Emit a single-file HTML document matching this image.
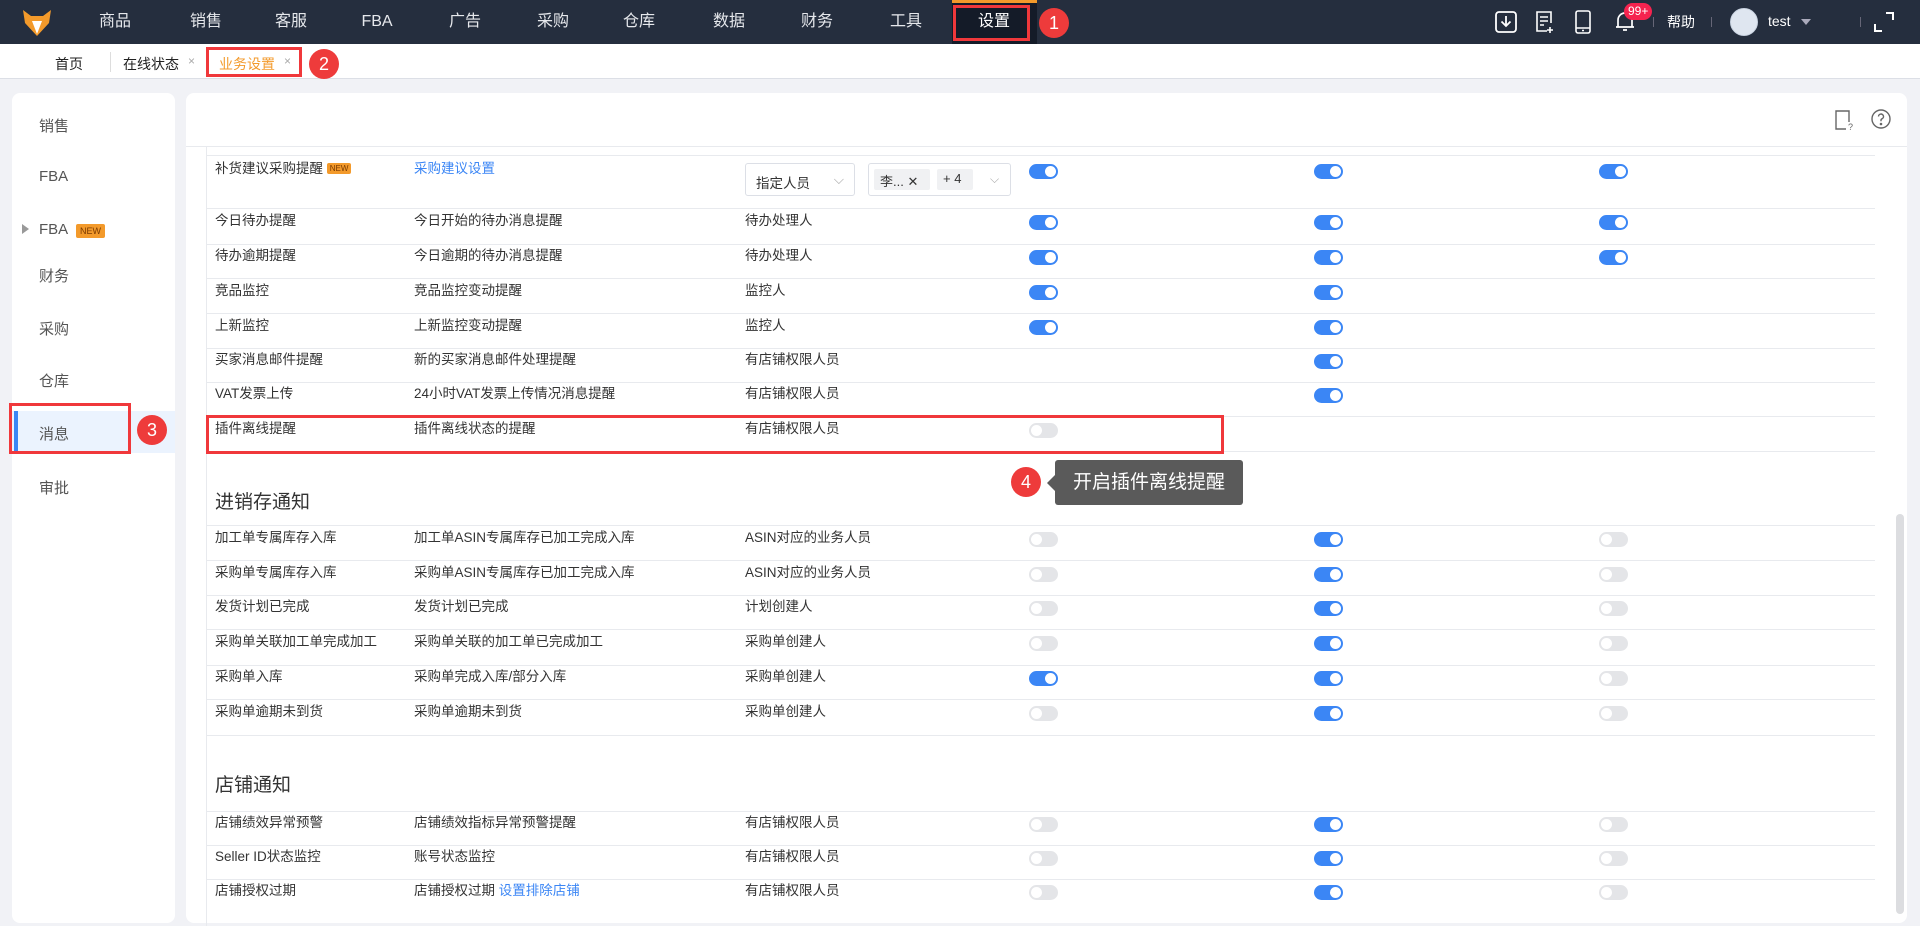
<!DOCTYPE html>
<html><head><meta charset="utf-8"><style>
*{margin:0;padding:0;box-sizing:border-box}
body{width:1920px;height:920px;overflow:hidden;background:#f1f2f6;font-family:"Liberation Sans","Noto Sans CJK SC",sans-serif;color:#333;position:relative}
.a{position:absolute}
.nav{left:0;top:0;width:1920px;height:44px;background:#252e3e}
.ni{top:0;height:44px;line-height:44px;color:#e6e8ec;font-size:16px;transform:translateX(-50%)}
.tabs{left:0;top:44px;width:1920px;height:35px;background:#fff;border-bottom:1px solid #dcdfe6}
.side{left:12px;top:93px;width:163px;height:830px;background:#fff;border-radius:8px}
.si{left:39px;font-size:15px;color:#555}
.main{left:186px;top:93px;width:1721px;height:830px;background:#fff;border-radius:8px}
.t{font-size:13.5px;color:#333}
.hl{height:1px;background:#e8eaee;left:206px;width:1669px}
.tg{width:29px;height:15px;border-radius:8px}
.on{background:#3b86f5}
.on:after{content:"";position:absolute;right:2px;top:2px;width:11px;height:11px;border-radius:50%;background:#fff}
.off{background:#e4e5e8}
.off:after{content:"";position:absolute;left:2px;top:2px;width:11px;height:11px;border-radius:50%;background:#fff}
.rb{border:3px solid #f0383b}
.rc{width:30px;height:30px;border-radius:50%;background:#ee3b3b;color:#fff;font-size:18px;text-align:center;line-height:30px}
.sec{font-size:19px;color:#333;left:215px}
</style></head><body>
<div class="a nav"></div>
<svg class="a" style="left:22px;top:9px" width="30" height="28" viewBox="0 0 30 28"><path d="M1 1 L9 7 L21 7 L29 1 L27 14 L15 27 L3 14Z" fill="#f39a2b"/><path d="M10 12 L15 25 L20 12Z" fill="#fff"/></svg>
<div class="a ni" style="left:115px">商品</div><div class="a ni" style="left:206px">销售</div><div class="a ni" style="left:291px">客服</div><div class="a ni" style="left:377px">FBA</div><div class="a ni" style="left:465px">广告</div><div class="a ni" style="left:553px">采购</div><div class="a ni" style="left:639px">仓库</div><div class="a ni" style="left:729px">数据</div><div class="a ni" style="left:817px">财务</div><div class="a ni" style="left:906px">工具</div>
<div class="a" style="left:952px;top:0;width:85px;height:44px;background:#141b28"></div>
<div class="a" style="left:952px;top:0;width:85px;height:3px;background:#f39a2b"></div>
<div class="a ni" style="left:994px;color:#fff">设置</div>
<div class="a rb" style="left:953px;top:5px;width:77px;height:36px"></div>
<div class="a rc" style="left:1039px;top:8px">1</div>
<svg class="a" style="left:1495px;top:11px" width="22" height="22" viewBox="0 0 22 22" fill="none" stroke="#fff" stroke-width="1.8"><rect x="1" y="1" width="20" height="20" rx="3"/><path d="M11 5v10M6.5 10.5 11 15l4.5-4.5"/></svg>
<svg class="a" style="left:1535px;top:10px" width="22" height="24" viewBox="0 0 22 24" fill="none" stroke="#fff" stroke-width="1.6"><path d="M16 13V2H2v19h10"/><path d="M5 7h8M5 11h8M5 15h4M15 17v6M12 20h6"/></svg>
<svg class="a" style="left:1575px;top:10px" width="16" height="24" viewBox="0 0 16 24" fill="none" stroke="#fff" stroke-width="1.6"><rect x="1" y="1" width="14" height="22" rx="2"/><path d="M1 18h14M7 20.5h2"/></svg>
<svg class="a" style="left:1615px;top:10px" width="20" height="22" viewBox="0 0 20 22" fill="none" stroke="#fff" stroke-width="1.7"><path d="M3 17V10a7 7 0 0 1 14 0v7H1h18M8 20h4"/></svg>
<div class="a" style="left:1624px;top:3px;height:17px;padding:0 4px;border-radius:9px;background:#f5234f;color:#fff;font-size:12px;line-height:17px">99+</div>
<div class="a" style="left:1653px;top:17px;width:1px;height:10px;background:#667"></div>
<div class="a" style="left:1667px;top:12px;color:#fff;font-size:14px">帮助</div>
<div class="a" style="left:1711px;top:17px;width:1px;height:10px;background:#667"></div>
<div class="a" style="left:1730px;top:8px;width:28px;height:28px;border-radius:50%;background:#dfe6f0;border:1px solid #c8d2e0"></div>
<div class="a" style="left:1768px;top:13px;color:#fff;font-size:14px">test</div>
<div class="a" style="left:1801px;top:19px;border:5px solid transparent;border-top:6px solid #aab;"></div>
<div class="a" style="left:1860px;top:17px;width:1px;height:10px;background:#667"></div>
<svg class="a" style="left:1874px;top:12px" width="20" height="20" viewBox="0 0 20 20" fill="none" stroke="#fff" stroke-width="2"><path d="M12 1h7v7M1 12v7h7"/></svg>
<div class="a tabs"></div>
<div class="a" style="left:55px;top:54px;font-size:14px;color:#222">首页</div>
<div class="a" style="left:110px;top:52px;width:1px;height:20px;background:#ddd"></div>
<div class="a" style="left:123px;top:54px;font-size:14px;color:#222">在线状态</div>
<div class="a" style="left:188px;top:54px;font-size:12px;color:#aaa">×</div>
<div class="a" style="left:219px;top:54px;font-size:14px;color:#f39a2b">业务设置</div>
<div class="a" style="left:284px;top:54px;font-size:12px;color:#aaa">×</div>
<div class="a rb" style="left:206px;top:47px;width:96px;height:30px"></div>
<div class="a rc" style="left:309px;top:49px">2</div>
<div class="a side"></div>
<div class="a si" style="top:115px">销售</div>
<div class="a si" style="top:168px">FBA</div>
<div class="a" style="left:22px;top:224px;border:5px solid transparent;border-left:7px solid #999"></div>
<div class="a si" style="top:221px">FBA</div>
<div class="a" style="left:76px;top:224px;background:#f39a2b;color:#7a3a00;font-size:9px;padding:2px 4px;border-radius:2px">NEW</div>
<div class="a si" style="top:265px">财务</div>
<div class="a si" style="top:318px">采购</div>
<div class="a si" style="top:370px">仓库</div>
<div class="a" style="left:12px;top:411px;width:163px;height:42px;background:#ebf3fe"></div>
<div class="a" style="left:14px;top:411px;width:4px;height:42px;background:#3b86f5"></div>
<div class="a si" style="top:423px">消息</div>
<div class="a si" style="top:477px">审批</div>
<div class="a rb" style="left:9px;top:403px;width:122px;height:51px"></div>
<div class="a rc" style="left:137px;top:415px">3</div>
<div class="a main"></div>
<svg class="a" style="left:1834px;top:109px" width="22" height="22" viewBox="0 0 22 22" fill="none" stroke="#666" stroke-width="1.4"><path d="M15 13V2H2v18h10"/><text x="14" y="21" font-size="9" fill="#666" stroke="none" font-family="Liberation Sans">?</text></svg>
<svg class="a" style="left:1871px;top:109px" width="20" height="20" viewBox="0 0 20 20" fill="none" stroke="#666" stroke-width="1.4"><circle cx="10" cy="10" r="9"/><path d="M7.5 7.5a2.5 2.5 0 1 1 3.5 2.3c-.7.3-1 .8-1 1.5v1"/><circle cx="10" cy="15" r=".6" fill="#666"/></svg>
<div class="a" style="left:186px;top:146px;width:1721px;height:1px;background:#e8eaee"></div>
<div class="a" style="left:206px;top:146px;width:1px;height:780px;background:#e8eaee"></div>
<div class="a" style="left:1896px;top:514px;width:8px;height:400px;background:#dcdde0;border-radius:4px"></div>
<div id="rows"></div>
<div class="a sec" style="top:487px">进销存通知</div>
<div class="a sec" style="top:770px">店铺通知</div>
<div class="a rb" style="left:206px;top:415px;width:1018px;height:39px"></div>
<div class="a rc" style="left:1011px;top:467px">4</div>
<div class="a" style="left:1055px;top:460px;width:188px;height:45px;background:#5a5a5a;border-radius:3px;color:#fff;font-size:19px;line-height:45px;text-align:center">开启插件离线提醒</div>
<div class="a" style="left:1047px;top:475px;border:8px solid transparent;border-right:8px solid #5a5a5a;border-left:0"></div>
<div class="a" style="left:745px;top:163px;width:110px;height:33px;border:1px solid #dcdfe6;border-radius:3px;font-size:13.5px;padding:8px 10px">指定人员<span style="position:absolute;right:10px;color:#aaa">⌵</span></div>
<div class="a" style="left:868px;top:163px;width:143px;height:33px;border:1px solid #dcdfe6;border-radius:3px"></div>
<div class="a" style="left:874px;top:169px;width:56px;height:21px;background:#f0f1f3;border-radius:2px;font-size:13px;padding:2px 6px">李... ✕</div>
<div class="a" style="left:937px;top:169px;width:36px;height:21px;background:#f0f1f3;border-radius:2px;font-size:13px;padding:2px 6px">+ 4</div>
<div class="a" style="left:990px;top:172px;color:#aaa;font-size:12px">⌵</div>
<script>
var R=[
[155,208,"补货建议采购提醒","采购建议设置","",[1,1,1]],
[208,244,"今日待办提醒","今日开始的待办消息提醒","待办处理人",[1,1,1]],
[244,278,"待办逾期提醒","今日逾期的待办消息提醒","待办处理人",[1,1,1]],
[278,313,"竞品监控","竞品监控变动提醒","监控人",[1,1,-1]],
[313,348,"上新监控","上新监控变动提醒","监控人",[1,1,-1]],
[348,382,"买家消息邮件提醒","新的买家消息邮件处理提醒","有店铺权限人员",[-1,1,-1]],
[382,416,"VAT发票上传","24小时VAT发票上传情况消息提醒","有店铺权限人员",[-1,1,-1]],
[416,451,"插件离线提醒","插件离线状态的提醒","有店铺权限人员",[0,-1,-1]],
[525,560,"加工单专属库存入库","加工单ASIN专属库存已加工完成入库","ASIN对应的业务人员",[0,1,0]],
[560,595,"采购单专属库存入库","采购单ASIN专属库存已加工完成入库","ASIN对应的业务人员",[0,1,0]],
[595,629,"发货计划已完成","发货计划已完成","计划创建人",[0,1,0]],
[629,665,"采购单关联加工单完成加工","采购单关联的加工单已完成加工","采购单创建人",[0,1,0]],
[665,699,"采购单入库","采购单完成入库/部分入库","采购单创建人",[1,1,0]],
[699,735,"采购单逾期未到货","采购单逾期未到货","采购单创建人",[0,1,0]],
[811,845,"店铺绩效异常预警","店铺绩效指标异常预警提醒","有店铺权限人员",[0,1,0]],
[845,879,"Seller ID状态监控","账号状态监控","有店铺权限人员",[0,1,0]],
[879,913,"店铺授权过期","店铺授权过期 <span style='color:#3b86f5'>设置排除店铺</span>","有店铺权限人员",[0,1,0]]];
var h="",X=[1029,1314,1599];
R.forEach(function(r,i){
 h+='<div class="a hl" style="top:'+r[0]+'px"></div>';
 if(i==0||i==7||i==13)h+='<div class="a hl" style="top:'+r[1]+'px"></div>';
 var ty=i==0?157:(r[0]+(r[1]-r[0])/2-17), tg=i==0?164:(r[0]+(r[1]-r[0])/2-11);
 var n1=r[2]; if(i==0)n1+=' <span style="background:#f39a2b;color:#7a3a00;font-size:8px;padding:1px 3px;border-radius:2px;vertical-align:2px">NEW</span>';
 h+='<div class="a t" style="left:215px;top:'+ty+'px">'+n1+'</div>';
 h+='<div class="a t" style="left:414px;top:'+ty+'px;'+(i==0?'color:#3b86f5':'')+'">'+r[3]+'</div>';
 h+='<div class="a t" style="left:745px;top:'+ty+'px">'+r[4]+'</div>';
 r[5].forEach(function(v,j){if(v>=0)h+='<div class="a tg '+(v?'on':'off')+'" style="left:'+X[j]+'px;top:'+tg+'px"></div>';});
});
document.getElementById("rows").innerHTML=h;
</script>
</body></html>
